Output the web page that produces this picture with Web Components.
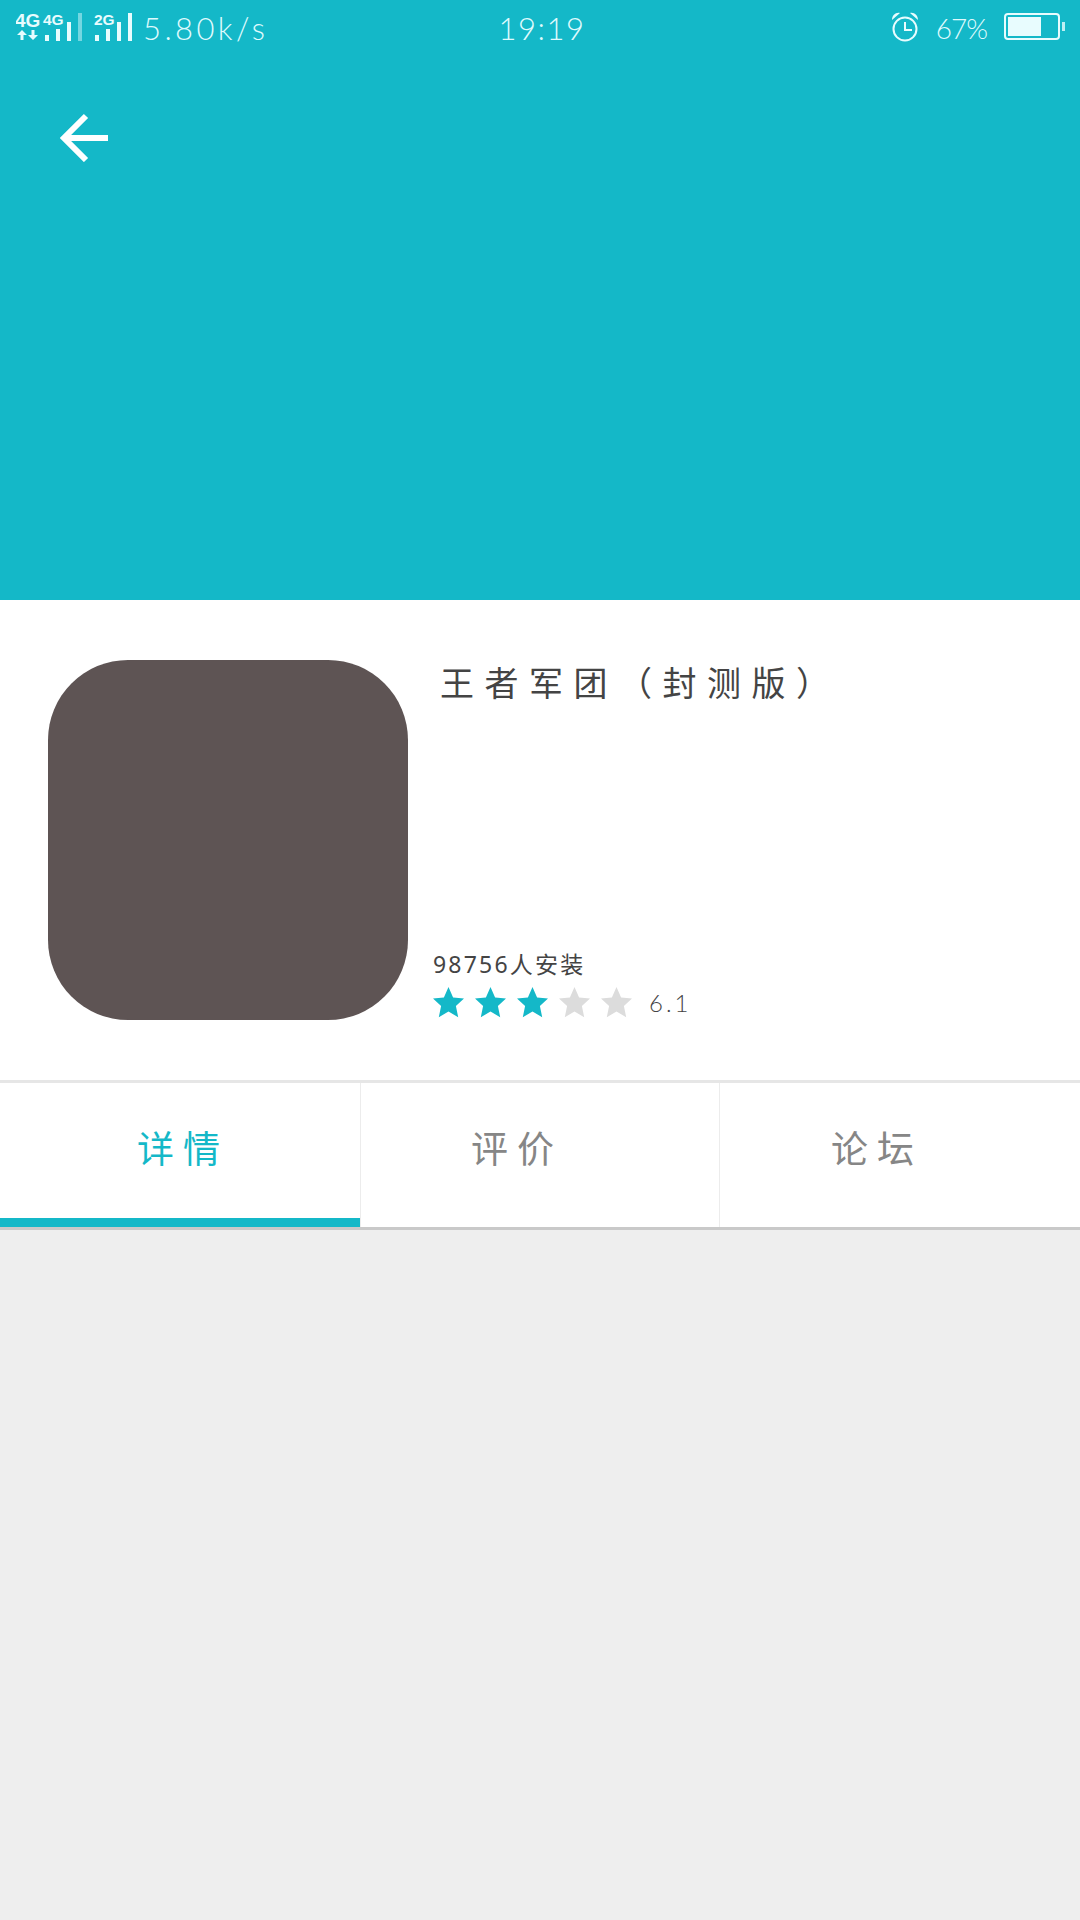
<!doctype html>
<html lang="zh">
<head>
<meta charset="utf-8">
<title>王者军团</title>
<style>
  html, body { margin: 0; height: 100%; }
  body {
    width: 1080px; height: 1920px; overflow: hidden;
    background: #eeeeee;
    font-family: "Noto Sans", "Noto Sans CJK SC", sans-serif;
    display: flex; flex-direction: column;
    --teal: #14b8c8;
  }
</style>
</head>
<body>
<app-header>
  <status-bar net="5.80k/s" time="19:19" battery="67"></status-bar>
</app-header>
<app-info name="王者军团（封测版）" installs="98756人安装" rating="3" score="6.1"></app-info>
<app-tabs>
  <tab-item active>详情</tab-item>
  <tab-item shift>评价</tab-item>
  <tab-item shift>论坛</tab-item>
</app-tabs>

<script>
/* phone status bar, drawn white on the teal header */
class StatusBar extends HTMLElement {
  constructor() { super(); this.attachShadow({ mode: 'open' }); }
  connectedCallback() {
    const net = this.getAttribute('net');
    const time = this.getAttribute('time');
    const pct = this.getAttribute('battery');
    this.shadowRoot.innerHTML = `
      <style>
        :host {
          display: grid; grid-template-columns: 1fr auto 1fr; align-items: center;
          height: 54px; padding: 0 14px 0 16px; color: #dffafd;
          font-family: Lato, "Open Sans", sans-serif; font-weight: 300; font-size: 31px;
        }
        .left, .right { display: flex; align-items: center; }
        .right { justify-content: flex-end; }
        .net { letter-spacing: 3.4px; margin: 2px 0 0 7px; }
        .time { letter-spacing: 1.5px; margin: 2px 0 0 2px; }
        .pct { font-size: 28px; letter-spacing: -1px; margin: 2px 17px 0 16px; }
        svg { display: block; }
        svg text { font-family: "Liberation Sans", sans-serif; font-weight: 700; fill: #e8fcfe; }
      </style>
      <div class="left">
        <svg width="120" height="54" viewBox="0 0 120 54">
          <text x="-1" y="27" font-size="19">4G</text>
          <text x="27" y="25" font-size="15.500">4G</text>
          <path d="M1 35l5-5 5 5H7.500v5h-3v-5zM12 35h3.500v-5h3v5H22l-5 5z" fill="#e8fcfe"/>
          <g fill="#e8fcfe">
            <rect x="29" y="35" width="4" height="6"/>
            <rect x="40" y="29" width="4" height="12"/>
            <rect x="51" y="22" width="4" height="19"/>
            <rect x="62" y="13" width="4" height="28" opacity=".45"/>
            <rect x="79" y="35" width="4" height="6"/>
            <rect x="90" y="29" width="4" height="12"/>
            <rect x="101" y="22" width="4" height="19"/>
            <rect x="112" y="13" width="4" height="28"/>
          </g>
          <text x="78" y="25" font-size="15.500">2G</text>
        </svg>
        <span class="net">${net}</span>
      </div>
      <span class="time">${time}</span>
      <div class="right">
        <svg width="30" height="32" viewBox="0 0 30 32">
          <circle cx="15" cy="18" r="11.500" fill="none" stroke="#e8fcfe" stroke-width="2"/>
          <path d="M15 11v8h7" fill="none" stroke="#e8fcfe" stroke-width="2"/>
          <path d="M2 9c0-5 4-8 8-7zM28 9c0-5-4-8-8-7z" fill="#e8fcfe"/>
        </svg>
        <span class="pct">${pct}%</span>
        <svg width="62" height="28" viewBox="0 0 62 28">
          <rect x="1" y="1" width="54" height="25" rx="3" fill="none" stroke="#e8fcfe" stroke-width="2"/>
          <rect x="4" y="4" width="33" height="19" fill="#e8fcfe"/>
          <rect x="58" y="9" width="3" height="9" fill="#e8fcfe" opacity=".8"/>
        </svg>
      </div>`;
  }
}

/* teal banner with back arrow; status bar is slotted in */
class AppHeader extends HTMLElement {
  constructor() { super(); this.attachShadow({ mode: 'open' }); }
  connectedCallback() {
    this.shadowRoot.innerHTML = `
      <style>
        :host { display: block; height: 600px; flex: none; background: var(--teal); }
        .back { display: block; margin: 54px 0 0 58px; }
      </style>
      <slot></slot>
      <svg class="back" width="54" height="54" viewBox="0 0 54 54">
        <path d="M50 30H6M28 8L6 30l22 22" fill="none" stroke="#fff" stroke-width="6"/>
      </svg>`;
  }
}

class AppInfo extends HTMLElement {
  constructor() { super(); this.attachShadow({ mode: 'open' }); }
  connectedCallback() {
    const on = +this.getAttribute('rating');
    let stars = '';
    for (let i = 0; i < 5; i++) {
      stars += `<svg width="31" height="31" viewBox="0 0 31 31"><path fill="${i < on ? 'var(--teal)' : '#dcdcdc'}" d="M15.500 0l4.600 10.400 10.900 1.200-8.100 7.400 2.300 11.200-9.700-5.700-9.700 5.700 2.300-11.200L0 11.600l10.900-1.200z"/></svg>`;
    }
    this.shadowRoot.innerHTML = `
      <style>
        :host { display: flex; flex: none; background: #fff; height: 360px; padding: 60px 0 60px 48px; }
        .icon { width: 360px; height: 360px; border-radius: 80px; background: #5e5454; flex: none; }
        .text { margin-left: 25px; display: flex; flex-direction: column; }
        .name { margin-left: 7px; font-size: 34px; line-height: 46px; letter-spacing: 10.500px; color: #444; white-space: nowrap; }
        .installs { margin-top: auto; font-size: 23px; line-height: 30px; letter-spacing: 2.200px; color: #444; }
        .rating { display: flex; align-items: center; gap: 11px; margin: 8px 0 2px; }
        .score { margin-left: 6px; font: 300 24px Lato, sans-serif; letter-spacing: 3px; color: #444; }
        svg { display: block; }
      </style>
      <div class="icon"></div>
      <div class="text">
        <div class="name">${this.getAttribute('name')}</div>
        <div class="installs">${this.getAttribute('installs')}</div>
        <div class="rating">${stars}<span class="score">${this.getAttribute('score')}</span></div>
      </div>`;
  }
}

class AppTabs extends HTMLElement {
  constructor() { super(); this.attachShadow({ mode: 'open' }); }
  connectedCallback() {
    this.shadowRoot.innerHTML = `
      <style>
        :host {
          display: grid; grid-template-columns: 360px 359px 361px; flex: none;
          height: 144px; background: #fff;
          border-top: 3px solid #e6e6e6; border-bottom: 3px solid #c9c9c9;
        }
      </style>
      <slot></slot>`;
  }
}

class TabItem extends HTMLElement {
  constructor() { super(); this.attachShadow({ mode: 'open' }); }
  connectedCallback() {
    this.shadowRoot.innerHTML = `
      <style>
        :host {
          display: flex; align-items: center; justify-content: center;
          box-sizing: border-box; padding: 0 0 16px 6px;
          font-size: 37px; letter-spacing: 9px; color: #868686;
          border-left: 1px solid #ececec;
        }
        :host(:first-child) { border-left: 0; }
        :host([shift]) { padding-right: 52px; }
        :host([active]) { color: var(--teal); border-bottom: 9px solid var(--teal); padding-bottom: 7px; }
      </style>
      <slot></slot>`;
  }
}

customElements.define('status-bar', StatusBar);
customElements.define('app-header', AppHeader);
customElements.define('app-info', AppInfo);
customElements.define('app-tabs', AppTabs);
customElements.define('tab-item', TabItem);
</script>
</body>
</html>
